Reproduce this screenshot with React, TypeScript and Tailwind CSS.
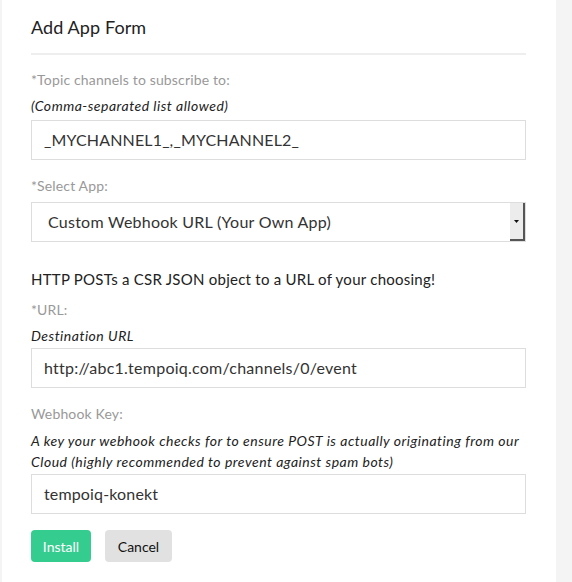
export default function App() {
  return (
    <div
      className="flex min-h-[582px] w-[572px] bg-[#f4f4f4]"
      style={{ fontFamily: 'Lato, "Open Sans", sans-serif' }}
    >
      <div className="ml-[2px] w-[554px] bg-white pl-[29px] pr-[30px]">
        {/* Header */}
        <h1 className="pt-[15px] text-[18px] leading-6 tracking-[0.1px] text-[#222]">Add App Form</h1>
        <div className="mt-[14px] h-[2px] bg-[#eeeeee]" />

        {/* Topic channels */}
        <label className="mt-[15px] block text-[14px] leading-5 tracking-[0.15px] text-[#999]">
          *Topic channels to subscribe to:
        </label>
        <p className="mt-[6px] text-[14px] italic leading-5 tracking-[0.5px] text-[#222]">
          (Comma-separated list allowed)
        </p>
        <div className="mt-[4px] flex h-10 items-center border border-[#dddddd] px-3 text-[16px] tracking-[0.15px] text-[#333]">
          _MYCHANNEL1_,_MYCHANNEL2_
        </div>

        {/* Select app */}
        <label className="mt-4 block text-[14px] leading-5 tracking-[0.15px] text-[#999]">*Select App:</label>
        <div className="mt-[6px] flex h-10 items-stretch border border-[#dddddd] text-[16px] tracking-[0.25px] text-[#333]">
          <div className="flex flex-1 items-center px-4">Custom Webhook URL (Your Own App)</div>
          <div className="flex w-[15px] items-center justify-center border-r-2 border-b-2 border-[#555] bg-[#ececec]">
            <svg width="5" height="3" viewBox="0 0 5 3" aria-hidden="true">
              <path d="M0 0h5L2.5 3z" fill="#111" />
            </svg>
          </div>
        </div>

        <p className="mt-[27px] text-[15px] leading-5 tracking-[0.25px] text-[#222]">
          HTTP POSTs a CSR JSON object to a URL of your choosing!
        </p>

        {/* URL */}
        <label className="mt-[11px] block text-[14px] leading-5 tracking-[0.15px] text-[#999]">*URL:</label>
        <p className="mt-[6px] text-[14px] italic leading-5 tracking-[0.5px] text-[#222]">Destination URL</p>
        <div className="mt-[2px] flex h-10 items-center border border-[#dddddd] px-3 text-[16px] tracking-[0.25px] text-[#333]">
          http://abc1.tempoiq.com/channels/0/event
        </div>

        {/* Webhook key */}
        <label className="mt-4 block text-[14px] leading-5 tracking-[0.15px] text-[#999]">Webhook Key:</label>
        <p className="mt-[6px] text-[14px] italic leading-[21px] tracking-[0.5px] text-[#222]">
          A key your webhook checks for to ensure POST is actually originating from our Cloud
          (highly recommended to prevent against spam bots)
        </p>
        <div className="mt-[2px] flex h-10 items-center border border-[#dddddd] px-3 text-[16px] tracking-[0.15px] text-[#333]">
          tempoiq-konekt
        </div>

        {/* Actions */}
        <div className="mt-4 flex gap-[14px]">
          <button className="h-8 w-[60px] rounded-[4px] bg-[#35cc8f] text-[14px] text-white">
            Install
          </button>
          <button className="h-8 w-[67px] rounded-[4px] bg-[#e1e1e1] text-[14px] text-[#111]">
            Cancel
          </button>
        </div>
      </div>
    </div>
  );
}
